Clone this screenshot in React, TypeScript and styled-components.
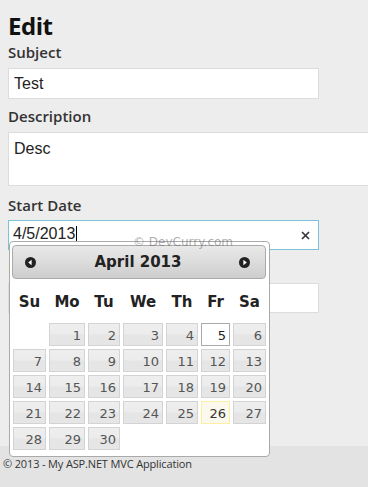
import React from "react";
import styled, { createGlobalStyle } from "styled-components";

const GlobalStyle = createGlobalStyle`
  html, body { margin: 0; padding: 0; }
  body { background: #ededed; color: #333; font-family: "Open Sans", "Noto Sans", sans-serif; }
  * { box-sizing: border-box; }
`;

const Page = styled.div`
  position: relative;
  min-height: 100vh;
  display: flex;
  flex-direction: column;
  overflow: hidden;
`;

const Main = styled.main`
  flex: 1;
  padding: 11px 0 0 8px;
`;

const Heading = styled.h1`
  margin: 0;
  font-family: "Open Sans", sans-serif;
  font-size: 24px;
  line-height: 30px;
  font-weight: 700;
  color: #111;
  letter-spacing: -0.5px;
`;

const Label = styled.label<{ $mt?: number; $mb?: number }>`
  display: block;
  margin: ${(p) => p.$mt ?? 0}px 0 ${(p) => p.$mb ?? 6}px;
  font-family: "Open Sans", sans-serif;
  font-size: 15px;
  line-height: 20px;
  font-weight: 600;
  color: #333;
`;

const TextInput = styled.input<{ $mb?: number; $h?: number }>`
  display: block;
  width: 311px;
  height: ${(p) => p.$h ?? 31}px;
  margin: 0 0 ${(p) => p.$mb ?? 7}px;
  padding: 0 5px;
  border: 1px solid #dcdcdc;
  background: #fff;
  font-family: "Liberation Sans", Arial, sans-serif;
  font-size: 16px;
  color: #222;
  outline: none;
`;

const TextArea = styled.textarea`
  display: block;
  width: 380px;
  height: 54px;
  margin: 0 0 9px;
  padding: 7px 5px;
  border: 1px solid #dcdcdc;
  background: #fff;
  font-family: "Liberation Sans", Arial, sans-serif;
  font-size: 16px;
  line-height: 18px;
  color: #222;
  resize: none;
  outline: none;
`;

const DateField = styled.div`
  position: relative;
  width: 311px;
  margin: 0 0 7px;
`;

const DateBox = styled.div`
  display: flex;
  align-items: center;
  height: 30px;
  padding: 0 8px 3px 4px;
  border: 1px solid #7ec2da;
  background: #fff;
`;

const DateText = styled.span`
  font-family: "Liberation Sans", Arial, sans-serif;
  font-size: 16px;
  color: #222;
`;

const Caret = styled.span`
  display: inline-block;
  width: 1px;
  height: 16px;
  margin-left: 1px;
  margin-top: 1px;
  background: #000;
`;

const Spacer = styled.span`
  flex: 1;
`;

const ClearIcon = styled.svg`
  display: block;
  width: 9px;
  height: 9px;
  margin-top: 4px;
`;

const Calendar = styled.div`
  position: absolute;
  left: 1px;
  top: 21px;
  z-index: 10;
  width: 261px;
  padding: 3px 3px 6px 2px;
  border: 1px solid #aaa;
  border-radius: 4px;
  background: #fff;
  font-family: "DejaVu Sans", Verdana, sans-serif;
`;

const CalHeader = styled.div`
  display: flex;
  align-items: center;
  height: 34px;
  padding: 0 15px 0 12px;
  border: 1px solid #aaa;
  border-radius: 4px;
  background: linear-gradient(to bottom, #e9e9e9 0%, #dcdcdc 50%, #cdcdcd 100%);
`;

const NavIcon = styled.svg`
  display: block;
  width: 11px;
  height: 11px;
  flex: none;
`;

const Title = styled.div`
  flex: 1;
  text-align: center;
  font-size: 15px;
  font-weight: 700;
  color: #222;
  margin-left: 1px;
`;

const DayGrid = styled.div<{ $mt: number }>`
  display: grid;
  grid-template-columns: 33px 36px 32px 40px 32px 29px 33px;
  column-gap: 3px;
  row-gap: 3px;
  margin: ${(p) => p.$mt}px 0 0 1px;
`;

const DayName = styled.div`
  text-align: center;
  font-size: 15px;
  line-height: 18px;
  font-weight: 700;
  color: #222;
`;

const DayCell = styled.div<{ $kind?: "default" | "active" | "today" }>`
  height: 23px;
  padding: 2px 3px 0;
  text-align: right;
  font-size: 13px;
  line-height: 19px;
  border: 1px solid
    ${(p) => (p.$kind === "active" ? "#aaaaaa" : p.$kind === "today" ? "#fcefa1" : "#d3d3d3")};
  background: ${(p) =>
    p.$kind === "active"
      ? "#fff"
      : p.$kind === "today"
      ? "#fbf9ee"
      : "linear-gradient(to bottom, #eeeeee 0%, #ececec 45%, #e5e5e5 55%, #e6e6e6 100%)"};
  color: ${(p) => (p.$kind === "active" ? "#212121" : p.$kind === "today" ? "#363636" : "#555")};
`;

const Empty = styled.div`
  height: 23px;
`;

const Watermark = styled.div`
  position: absolute;
  left: 133px;
  top: 235px;
  z-index: 20;
  font-family: "DejaVu Sans", Verdana, sans-serif;
  font-size: 12px;
  line-height: 14px;
  color: rgba(105, 105, 105, 0.55);
  pointer-events: none;
`;

const Footer = styled.footer`
  height: 41px;
  padding: 10px 0 0 3px;
  background: #e3e3e3;
  font-family: "Open Sans", sans-serif;
  font-size: 11px;
  line-height: 16px;
  letter-spacing: -0.15px;
  color: #333;
`;

const dayNames = ["Su", "Mo", "Tu", "We", "Th", "Fr", "Sa"];

function PrevIcon() {
  return (
    <NavIcon viewBox="0 0 11 11">
      <circle cx="5.5" cy="5.5" r="5.5" fill="#222" />
      <polygon points="3.2,5.5 6.6,2.8 6.6,8.2" fill="#fff" />
    </NavIcon>
  );
}

function NextIcon() {
  return (
    <NavIcon viewBox="0 0 11 11">
      <circle cx="5.5" cy="5.5" r="5.5" fill="#222" />
      <polygon points="7.8,5.5 4.4,2.8 4.4,8.2" fill="#fff" />
    </NavIcon>
  );
}

export default function App() {
  const cells: React.ReactNode[] = [];
  cells.push(<Empty key="e0" />);
  for (let d = 1; d <= 30; d++) {
    const kind = d === 5 ? "active" : d === 26 ? "today" : "default";
    cells.push(
      <DayCell key={d} $kind={kind}>
        {d}
      </DayCell>
    );
  }

  return (
    <Page>
      <GlobalStyle />
      <Main>
        <Heading>Edit</Heading>
        <Label $mt={1}>Subject</Label>
        <TextInput readOnly defaultValue="Test" />
        <Label>Description</Label>
        <TextArea readOnly defaultValue="Desc" />
        <Label $mb={5}>Start Date</Label>
        <DateField>
          <DateBox>
            <DateText>4/5/2013</DateText>
            <Caret />
            <Spacer />
            <ClearIcon viewBox="0 0 9 9">
              <path d="M1 1 L8 8 M8 1 L1 8" stroke="#333" strokeWidth="1.6" />
            </ClearIcon>
          </DateBox>
          <Calendar>
            <CalHeader>
              <PrevIcon />
              <Title>April 2013</Title>
              <NextIcon />
            </CalHeader>
            <DayGrid $mt={14}>
              {dayNames.map((n) => (
                <DayName key={n}>{n}</DayName>
              ))}
            </DayGrid>
            <DayGrid $mt={12}>{cells}</DayGrid>
          </Calendar>
        </DateField>
        <Label>End Date</Label>
        <TextInput readOnly defaultValue="" $mb={0} $h={30} />
      </Main>
      <Footer>© 2013 - My ASP.NET MVC Application</Footer>
      <Watermark>© DevCurry.com</Watermark>
    </Page>
  );
}
